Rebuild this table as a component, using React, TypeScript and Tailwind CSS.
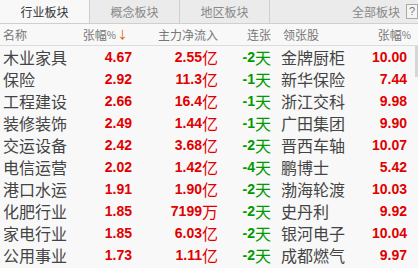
const rows = [
  { name: '木业家具', pct: '4.67', flow: '2.55', unit: '亿', days: '-2', lead: '金牌厨柜', leadPct: '10.00' },
  { name: '保险', pct: '2.92', flow: '11.3', unit: '亿', days: '-1', lead: '新华保险', leadPct: '7.44' },
  { name: '工程建设', pct: '2.66', flow: '16.4', unit: '亿', days: '-1', lead: '浙江交科', leadPct: '9.98' },
  { name: '装修装饰', pct: '2.49', flow: '1.44', unit: '亿', days: '-1', lead: '广田集团', leadPct: '9.90' },
  { name: '交运设备', pct: '2.42', flow: '3.68', unit: '亿', days: '-2', lead: '晋西车轴', leadPct: '10.07' },
  { name: '电信运营', pct: '2.02', flow: '1.42', unit: '亿', days: '-4', lead: '鹏博士', leadPct: '5.42' },
  { name: '港口水运', pct: '1.91', flow: '1.90', unit: '亿', days: '-2', lead: '渤海轮渡', leadPct: '10.03' },
  { name: '化肥行业', pct: '1.85', flow: '7199', unit: '万', days: '-2', lead: '史丹利', leadPct: '9.92' },
  { name: '家电行业', pct: '1.85', flow: '6.03', unit: '亿', days: '-2', lead: '银河电子', leadPct: '10.04' },
  { name: '公用事业', pct: '1.73', flow: '1.11', unit: '亿', days: '-2', lead: '成都燃气', leadPct: '9.97' },
]

const cjk = "font-['Noto_Sans_CJK_SC',sans-serif]"
const num = "font-['Liberation_Sans',Arial,sans-serif] font-bold text-[14px]"

export default function App() {
  return (
    <main className={`relative w-[418px] h-[268px] overflow-hidden bg-[#f8f8f8] ${cjk}`}>

      {/* Tabs */}
      <div className="flex h-[24px] bg-[#ebebeb] border-b border-[#cfcfcf] text-[12px] leading-none">
        <div className="w-[90px] flex items-center justify-center bg-[#f8f8f8] border-r border-[#cfcfcf] text-[#333]">行业板块</div>
        <div className="w-[90px] flex items-center justify-center border-r border-[#cfcfcf] text-[#888]">概念板块</div>
        <div className="w-[90px] flex items-center justify-center border-r border-[#cfcfcf] text-[#888]">地区板块</div>
        <div className="flex-1 flex items-center justify-end text-[#888]">
          <span>全部板块</span>
          <span className="ml-[6px] w-[12px] h-[15px] flex items-center justify-center border border-[#aaa] bg-[#f4f4f4] text-[11px] text-[#777] font-['Liberation_Sans',sans-serif]">?</span>
        </div>
      </div>

      {/* Header */}
      <div className="flex items-center h-[22px] border-b border-[#dcdcdc] text-[12px] text-[#777] leading-none">
        <div className="w-[80px] pl-[3px]">名称</div>
        <div className="w-[52px] pr-[4px] flex justify-end items-center">
          张幅<span className="text-[10px]">%</span><span className="text-[#e05a00] text-[11px] ml-[1px]">↓</span>
        </div>
        <div className="w-[86px] text-right">主力净流入</div>
        <div className="w-[53px] text-right">连张</div>
        <div className="w-[90px] pl-[12px]">领张股</div>
        <div className="w-[50px] flex justify-end items-center">张幅<span className="text-[10px]">%</span></div>
      </div>

      {/* Rows */}
      <div className="flex flex-col">
        {rows.map((r) => (
          <div key={r.name} className="flex items-center h-[22px] leading-none">
            <div className="w-[80px] pl-[3px] text-[16px] text-[#444]">{r.name}</div>
            <div className={`w-[52px] text-right text-[#e00000] ${num}`}>{r.pct}</div>
            <div className="w-[86px] flex justify-end items-center text-[#e00000]">
              <span className={num}>{r.flow}</span>
              <span className="text-[16px]">{r.unit}</span>
            </div>
            <div className="w-[53px] flex justify-end items-center text-[#009a00]">
              <span className={num}>{r.days}</span>
              <span className="text-[16px]">天</span>
            </div>
            <div className="w-[90px] pl-[10px] text-[16px] text-[#444]">{r.lead}</div>
            <div className={`w-[46px] text-right text-[#e00000] ${num}`}>{r.leadPct}</div>
          </div>
        ))}
      </div>

      {/* Scrollbar thumb */}
      <div className="absolute right-0 top-[46px] w-[3px] h-[31px] bg-[#d6d6d6]" />
    </main>
  )
}
